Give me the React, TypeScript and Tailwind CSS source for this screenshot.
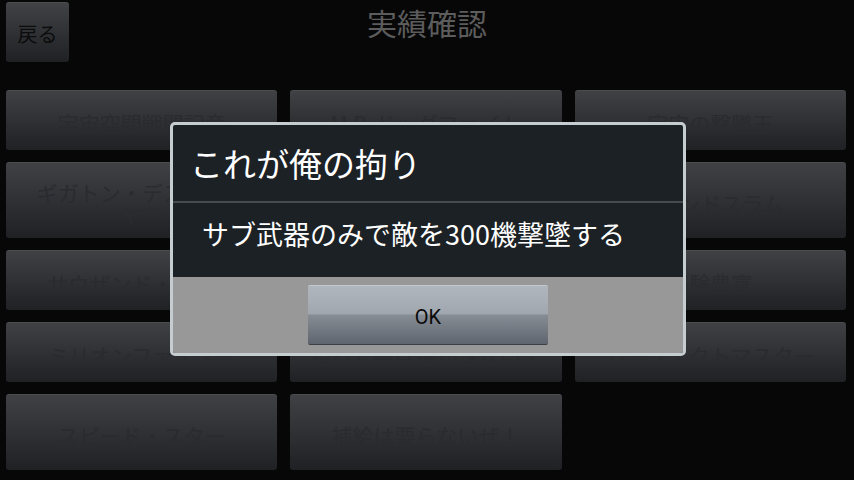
const jp = { fontFamily: '"Noto Sans CJK JP", "Noto Sans", sans-serif' };

const rows: string[][] = [
  ["宇宙空間戦闘記章", "M.P. ドッグファイト", "宇宙の撃墜王"],
  ["ギガトン・デストロイ\nヤー", "ワンマンアーミー", "グランドスラム"],
  ["サウザンド・ロード", "エースパイロット", "経験豊富"],
  ["ミリオンファイター", "狙った敵は逃がさない！", "パーフェクトマスター"],
  ["スピード・スター", "補給は要らないぜ！"],
];

const Tile = ({ label }: { label: string }) => (
  <div className="flex items-center justify-center rounded-[3px] border-t border-[#4a4c50] bg-gradient-to-b from-[#3f4145] to-[#1f2124] px-2 pt-[4px] text-center text-[21px] leading-[22px] whitespace-pre-line text-[#2a2b2e]">
    {label}
  </div>
);

const App = () => {
  return (
    <div className="relative h-[480px] w-[854px] overflow-hidden bg-[#070707]" style={jp}>
      {/* header */}
      <div className="relative flex h-[90px] items-start px-[6px] pt-[2px]">
        <div className="flex h-[60px] w-[63px] items-center justify-center rounded-[3px] border-t border-[#4c4e52] bg-gradient-to-b from-[#404246] to-[#1f2124] pt-[2px] text-[20px] text-[#0c0c0c]">
          戻る
        </div>
        <div className="absolute inset-x-0 top-0 text-center text-[30px] leading-[44px] text-[#5c5c5c]">
          実績確認
        </div>
      </div>

      {/* achievement grid */}
      <div className="grid grid-cols-3 grid-rows-[60px_76px_60px_60px_76px] gap-x-[13px] gap-y-[12px] px-[6px] pr-[8px]">
        {rows.flat().map((label, i) => (
          <Tile key={i} label={label} />
        ))}
      </div>

      {/* achievement dialog */}
      <div className="absolute left-[170px] top-[122px] flex h-[234px] w-[516px] flex-col overflow-hidden rounded-[5px] border-[3px] border-[#c6cdd0] bg-[#1c2125]">
        <div className="flex h-[76px] items-center px-[17px] pt-[2px] text-[33px] text-white">
          これが俺の拘り
        </div>
        <div className="h-[2px] bg-[#464b4f]" />
        <div className="flex h-[74px] items-center px-[29px] pb-[12px] text-[27px] text-white">
          サブ武器のみで敵を300機撃墜する
        </div>
        <div className="flex flex-1 items-center justify-center bg-[#989898]">
          <div
            className="flex h-[60px] w-[240px] items-center justify-center rounded-[2px] border-t border-b border-t-[#c4c9ce] border-b-[#3c4047] bg-[linear-gradient(#b0b6bd,#a1a7ae_48%,#878d95_50%,#5e656e)] pt-[4px] text-[20px] text-[#0a0a0a]"
            style={{ fontFamily: 'Roboto, "Open Sans", sans-serif' }}
          >
            OK
          </div>
        </div>
      </div>
    </div>
  );
};

export default App;
